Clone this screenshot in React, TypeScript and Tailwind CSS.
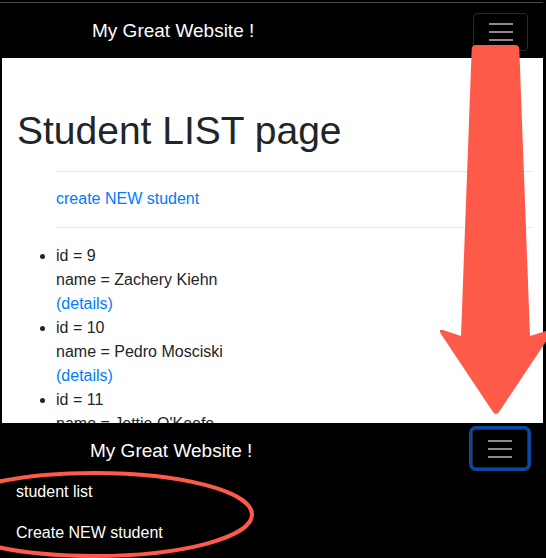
import React from 'react'

const students = [
  { id: 9, name: 'Zachery Kiehn' },
  { id: 10, name: 'Pedro Mosciski' },
  { id: 11, name: "Jettie O'Keefe" },
]

function Burger({ focused }: { focused?: boolean }) {
  return (
    <button
      className={`flex flex-col items-center justify-center gap-[6px] rounded-[4px] border border-[#2a2a2a] bg-black ${
        focused ? 'w-[56px] h-[39px] ring-[3px] ring-[#0b47a6]' : 'w-[55px] h-[38px]'
      }`}
    >
      <span className="block w-[24px] h-[2px] bg-[#8c8c8c]" />
      <span className="block w-[24px] h-[2px] bg-[#8c8c8c]" />
      <span className="block w-[24px] h-[2px] bg-[#8c8c8c]" />
    </button>
  )
}

export default function App() {
  return (
    <div className="relative w-[546px] h-[558px] overflow-hidden bg-black font-['Liberation_Sans',Arial,sans-serif]">
      <div className="mt-[2px] mr-[3px] h-px bg-[#4a4a4a]" />

      {/* top screenshot: navbar + page */}
      <header className="h-[55px] mr-[3px] flex items-center justify-between">
        <span className="pl-[92px] pt-[2px] text-[19px] text-white">My Great Website !</span>
        <div className="mr-[15px] mt-[3px]">
          <Burger />
        </div>
      </header>

      <main className="ml-[2px] mr-[3px] h-[365px] overflow-hidden bg-white text-[#212529]">
        <h1 className="mt-[50px] pl-[15px] text-[39px] leading-[46px]">Student LIST page</h1>
        <div className="ml-[54px] mr-[11px]">
          <hr className="mt-[17px] border-t border-[#e6e6e6]" />
          <a className="mt-[15px] block text-[16px] leading-[24px] text-[#007bff]">create NEW student</a>
          <hr className="mt-[16px] border-t border-[#e6e6e6]" />
        </div>
        <ul className="mt-[16px] pl-[54px] list-disc text-[16px] leading-[24px]">
          {students.map((s) => (
            <li key={s.id}>
              <div>id = {s.id}</div>
              <div>name = {s.name}</div>
              <a className="block text-[#007bff]">(details)</a>
            </li>
          ))}
        </ul>
      </main>

      {/* bottom screenshot: expanded navbar */}
      <nav className="h-[135px] mr-[3px] text-white">
        <div className="flex items-start justify-between">
          <span className="mt-[14px] pl-[90px] text-[19px] leading-[28px]">My Great Website !</span>
          <div className="mt-[6px] mr-[15px]">
            <Burger focused />
          </div>
        </div>
        <div className="mt-[4px] pl-[16px] flex flex-col text-[16px] leading-[24px]">
          <a className="py-[8px]">student list</a>
          <a className="pt-[9px] pb-[8px]">Create NEW student</a>
        </div>
      </nav>

      {/* annotations */}
      <svg className="absolute inset-0 pointer-events-none" width="546" height="558" viewBox="0 0 546 558">
        <path
          d="M476,45 L515,45 Q519,45 519.3,49 L530,336 L549,330 Q554,329 551,334 L499,412 Q496,416 493,412 L441,334 Q438,329 443,330 L461,336 L471.7,49 Q472,45 476,45 Z"
          fill="#fe5a4a"
        />
        <ellipse cx="95" cy="514.5" rx="157" ry="41.5" fill="none" stroke="#fe5a4a" strokeWidth="4" />
      </svg>
    </div>
  )
}
